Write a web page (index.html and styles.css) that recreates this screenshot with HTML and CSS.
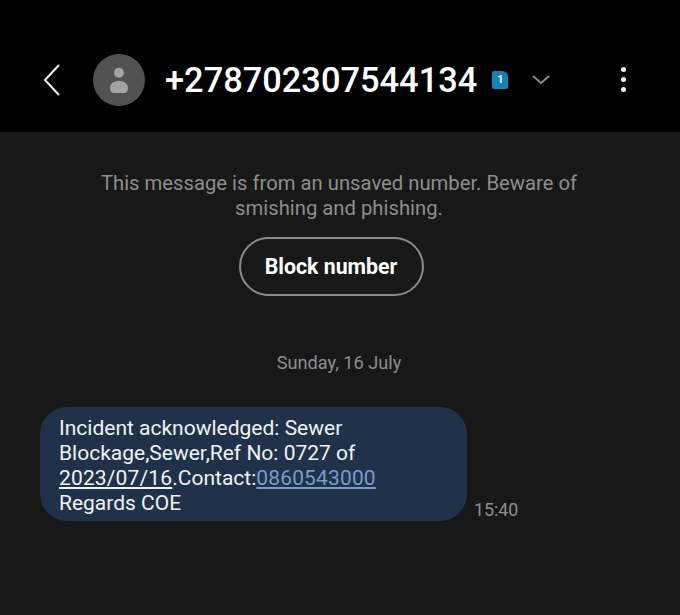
FILE: index.html
```html
<!DOCTYPE html>
<html>
    <head>
        <meta charset="utf-8" />
        <title>Messages</title>
        <link rel="stylesheet" href="styles.css">
    </head>

    <body>
        <div class="header">
            <svg class="back" width="17" height="32" viewBox="0 0 17 32">
                <path d="M16 1 L2 16 L16 31" fill="none" stroke="#f2f2f2" stroke-width="2" />
            </svg>
            <div class="avatar">
                <svg width="24" height="30" viewBox="0 0 24 30">
                    <circle cx="12" cy="7.7" r="5" fill="#a3a3a3" />
                    <path d="M3 23 C3 18.5 7 16 12 16 C17 16 21 18.5 21 23 C21 26 19.5 28 17 28 L7 28 C4.5 28 3 26 3 23 Z" fill="#a3a3a3" />
                </svg>
            </div>
            <div class="number">+278702307544134</div>
            <div class="sim">1</div>
            <svg class="chevron" width="18" height="10" viewBox="0 0 18 10">
                <path d="M1 1 L9 8 L17 1" fill="none" stroke="#8f8f8f" stroke-width="1.8" />
            </svg>
            <div class="more">
                <span></span>
                <span></span>
                <span></span>
            </div>
        </div>

        <div class="notice">This message is from an unsaved number. Beware of smishing and phishing.</div>
        <div class="block-row">
            <div class="block-btn">Block number</div>
        </div>

        <div class="date">Sunday, 16 July</div>

        <div class="message">
            <div class="bubble">
                Incident acknowledged: Sewer<br />
                Blockage,Sewer,Ref No: 0727 of<br />
                <u>2023/07/16</u>.Contact:<a href="#">0860543000</a><br />
                Regards COE
            </div>
            <div class="time">15:40</div>
        </div>
    </body>
</html>
```

FILE: styles.css
```css
html,
body {
    height: 100%;
}

body {
    margin: 0;
    overflow: hidden;
    font-family: 'Roboto', sans-serif;
    background: #181818;
    color: #f2f2f2;
}

.header {
    box-sizing: border-box;
    display: flex;
    align-items: center;
    height: 132px;
    padding: 27px 0 0 43px;
    background: #000;
}

.back {
    margin-right: 33px;
}

.avatar {
    display: flex;
    align-items: center;
    justify-content: center;
    width: 52px;
    height: 52px;
    margin-right: 20px;
    border-radius: 50%;
    background: #525252;
}

.number {
    font-size: 34.4px;
    font-weight: 500;
    color: #fff;
}

.sim {
    width: 16px;
    height: 18px;
    margin-left: 15px;
    border-radius: 2px 6px 2px 2px;
    background: #1382b5;
    color: #e8f4fa;
    font-size: 11px;
    font-weight: 700;
    line-height: 18px;
    text-align: center;
}

.chevron {
    margin-left: 24px;
}

.more {
    display: flex;
    flex-direction: column;
    gap: 5px;
    margin-left: 71px;
}

.more span {
    width: 5px;
    height: 5px;
    border-radius: 50%;
    background: #f2f2f2;
}

.notice {
    width: 500px;
    margin: 39px 0 0 89px;
    color: #8e8e8e;
    font-size: 20.25px;
    line-height: 25px;
    text-align: center;
}

.block-row {
    display: flex;
    justify-content: center;
    margin-top: 16px;
    padding-right: 18px;
}

.block-btn {
    box-sizing: border-box;
    width: 185px;
    height: 59px;
    border: 2px solid #8a8a8a;
    border-radius: 30px;
    color: #fff;
    font-size: 21.3px;
    font-weight: 700;
    line-height: 56px;
    text-align: center;
}

.date {
    margin-top: 55px;
    padding-right: 2px;
    color: #8e8e8e;
    font-size: 18.2px;
    line-height: 24px;
    text-align: center;
}

.message {
    display: flex;
    align-items: flex-end;
    margin: 32px 0 0 40px;
}

.bubble {
    box-sizing: border-box;
    width: 427px;
    height: 114px;
    padding: 9px 19px 0;
    border-radius: 27px;
    background: #1f3249;
    font-size: 21px;
    line-height: 25px;
}

.bubble u,
.bubble a {
    letter-spacing: 0.15px;
}

.bubble a {
    color: #7b9bcf;
}

.time {
    margin: 0 0 1px 7px;
    color: #8e8e8e;
    font-size: 17.8px;
    line-height: 20px;
}
```
